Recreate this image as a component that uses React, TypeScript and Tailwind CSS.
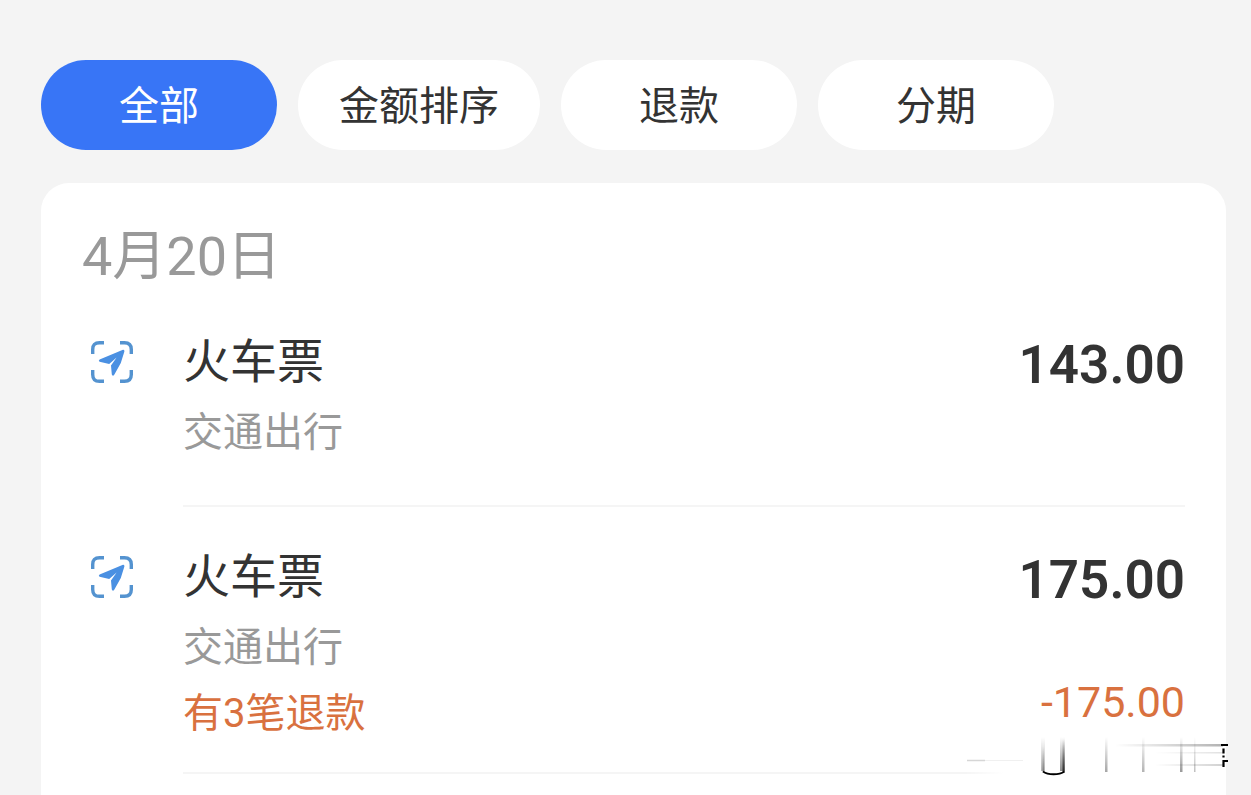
const filters = ['全部', '金额排序', '退款', '分期'];

interface Bill {
  id: number;
  title: string;
  category: string;
  amount: string;
  refund?: { label: string; amount: string };
}

const bills: Bill[] = [
  { id: 1, title: '火车票', category: '交通出行', amount: '143.00' },
  {
    id: 2,
    title: '火车票',
    category: '交通出行',
    amount: '175.00',
    refund: { label: '有3笔退款', amount: '-175.00' },
  },
];

function TravelIcon() {
  return (
    <svg viewBox="0 0 42 42" className="w-[42px] h-[42px]" fill="none" aria-hidden="true">
      <path
        d="M1.7 13V8.5Q1.7 1.7 8.5 1.7H13M29 1.7H33.5Q40.3 1.7 40.3 8.5V13M40.3 29V33.5Q40.3 40.3 33.5 40.3H29M13 40.3H8.5Q1.7 40.3 1.7 33.5V29"
        stroke="#5493d0"
        strokeWidth="3.4"
      />
      <path
        d="M32 8.7L8.6 18.4Q7 19.6 8.6 20.8L18.2 23L25.6 16.6L20 24.4L20.8 33.6Q21.8 35.8 23.4 33.4L29.8 22L33.4 10.4Q33.6 8.4 32 8.7Z"
        fill="#4a90e2"
      />
    </svg>
  );
}

function BillRow({ bill }: { bill: Bill }) {
  return (
    <li className="flex pt-10">
      <div className="w-[101px] shrink-0 pl-[9px] pt-[9px]">
        <TravelIcon />
      </div>
      <div className={`flex-1 border-b-2 border-[#f5f5f5] ${bill.refund ? 'pb-[30px]' : 'pb-11'}`}>
        <div className="flex justify-between">
          <h3 className="text-[47px] leading-[60px]">{bill.title}</h3>
          <span className="pt-[3px] text-[53px] leading-[60px] font-semibold">{bill.amount}</span>
        </div>
        <p className="mt-[10px] text-[40px] leading-[56px] text-[#999999]">{bill.category}</p>
        {bill.refund && (
          <div className="mt-[10px] flex justify-between text-[#d9713f]">
            <span className="text-[40px] leading-[56px]">{bill.refund.label}</span>
            <span className="text-[43px] leading-[32px]">{bill.refund.amount}</span>
          </div>
        )}
      </div>
    </li>
  );
}

// Leftover streaks in the bottom corner
function Streaks() {
  return (
    <svg viewBox="0 0 264 44" className="absolute right-[-3px] bottom-4 w-[264px] h-[44px]" fill="none" aria-hidden="true">
      <defs>
        <linearGradient id="fall" x1="0" y1="0" x2="0" y2="1">
          <stop offset="0" stopColor="#000" stopOpacity="0" />
          <stop offset="1" stopColor="#000" />
        </linearGradient>
        <linearGradient id="side" x1="0" y1="0" x2="1" y2="0">
          <stop offset="0" stopColor="#000" stopOpacity="0" />
          <stop offset="1" stopColor="#000" />
        </linearGradient>
        <linearGradient id="fade" x1="0" y1="0" x2="1" y2="0">
          <stop offset="0" stopColor="#fff" stopOpacity="0" />
          <stop offset="0.15" stopColor="#fff" />
        </linearGradient>
      </defs>
      <rect x="0" y="6" width="256" height="36" fill="url(#fade)" />

      <path d="M2 25.5H20" stroke="#000" strokeWidth="1.5" opacity="0.16" />
      <path d="M20 25.5H58" stroke="#000" strokeWidth="1" opacity="0.06" />

      <rect x="76" y="2" width="4" height="34" fill="url(#fall)" opacity="0.3" />
      <rect x="77.5" y="12" width="1.5" height="25" fill="url(#fall)" opacity="0.3" />
      <rect x="95" y="2" width="5" height="34" fill="url(#fall)" opacity="0.45" />
      <rect x="97.5" y="4" width="2" height="33" fill="url(#fall)" opacity="0.7" />
      <path d="M78 36.5C83 40.2 94 40.2 99.5 36.5" stroke="#000" strokeWidth="2" />

      <rect x="140" y="2" width="2.5" height="35" fill="url(#fall)" opacity="0.35" />
      <rect x="177" y="2" width="2.5" height="35" fill="url(#fall)" opacity="0.3" />
      <rect x="215" y="2" width="2.5" height="35" fill="url(#fall)" opacity="0.4" />
      <rect x="229" y="2" width="1.5" height="35" fill="url(#fall)" opacity="0.25" />

      <rect x="150" y="9" width="108" height="2.5" fill="url(#side)" opacity="0.3" />
      <rect x="190" y="17" width="68" height="1.5" fill="url(#side)" opacity="0.12" />
      <rect x="190" y="29" width="68" height="2" fill="url(#side)" opacity="0.18" />

      <path d="M256 10H263M258.5 13.5V18.5M258.5 20.5V22.5M258.5 32V26H263" stroke="#000" strokeWidth="2.2" />
    </svg>
  );
}

export default function App() {
  return (
    <main className="flex flex-col min-h-screen bg-[#f4f4f4] pt-[60px] pl-[41px] pr-[25px] text-[#333333] font-[Roboto,'Noto_Sans_CJK_SC',sans-serif]">
      <nav className="flex gap-[21px]">
        {filters.map((name, i) => (
          <button
            key={name}
            type="button"
            className={`h-[90px] min-w-[236px] px-[41px] pt-[3px] rounded-full text-[40px] leading-[56px] ${
              i === 0 ? 'bg-[#3875f6] text-white' : 'bg-white'
            }`}
          >
            {name}
          </button>
        ))}
      </nav>

      <section className="relative flex-1 mt-[33px] px-[41px] pt-[42px] rounded-t-[28px] bg-white">
        <h2 className="mb-[3px] text-[54px] leading-[64px] text-[#999999]">4月20日</h2>
        <ul>
          {bills.map((bill) => (
            <BillRow key={bill.id} bill={bill} />
          ))}
        </ul>
        <Streaks />
      </section>
    </main>
  );
}
